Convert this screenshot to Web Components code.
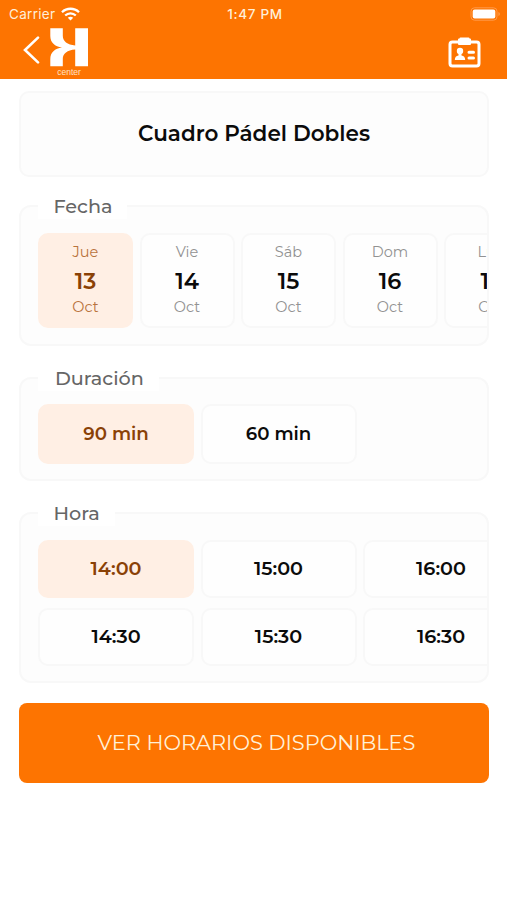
<!DOCTYPE html>
<html lang="es">
<head>
<meta charset="utf-8">
<meta name="viewport" content="width=device-width, initial-scale=1">
<title>Cuadro Pádel Dobles</title>
<style>
  body {
    margin: 0;
    background: #fff;
    color: #0b0b0b;
    font-family: Montserrat, Inter, "Liberation Sans", sans-serif;
  }
</style>
</head>
<body>
<booking-page></booking-page>

<script>
class AppHeader extends HTMLElement {
  constructor() {
    super();
    this.attachShadow({ mode: 'open' }).innerHTML = `
    <style>
    :host {
      display: flex;
      flex-direction: column;
      height: 79px;
      background: #fd7401;
      color: #fff;
      font-family: Inter, "Liberation Sans", sans-serif;
    }
    .status {
      display: grid;
      grid-template-columns: 1fr auto 1fr;
      align-items: center;
      height: 27px;
      padding: 0 6px 0 9px;
      font-size: 13.5px;
      color: #ffefd9;
    }
    .carrier { display: flex; align-items: center; gap: 6px; letter-spacing: .3px; }
    .time { font-size: 13.5px; font-weight: 500; letter-spacing: .65px; }
    .battery { justify-self: end; }
    .bar {
      display: flex;
      justify-content: space-between;
      height: 52px;
      padding: 0 26px 0 23px;
    }
    .left { display: flex; gap: 9px; }
    .back { margin-top: 9px; }
    .badge { margin-top: 10px; }
    .logo { display: flex; flex-direction: column; align-items: center; width: 40px; padding-top: 1px; }
    .logo span {
      font: 8.5px/9px "Liberation Sans", sans-serif;
      margin-top: 1px;
      color: #ffe3c4;
    }
    svg { display: block; }
    </style>
    <div class="status">
      <div class="carrier"><span>Carrier</span>
        <svg width="19" height="14" viewBox="0 0 19 14" fill="none" stroke="#fff" stroke-width="2.3">
          <path d="M1 5.2C5.7.6 13.3.6 18 5.2M4.2 8.5c3-2.9 7.600-2.900 10.600 0"/>
          <path d="M9.500 13.500 6.800 10.800c1.600-1.400 3.800-1.400 5.400 0z" fill="#fff" stroke="none"/>
        </svg>
      </div>
      <span class="time">1:47 PM</span>
      <svg class="battery" width="31" height="14" viewBox="0 0 31 14">
        <rect x="1" y=".8" width="26" height="12.400" rx="3.500" fill="none" stroke="#ff9a4a"/>
        <rect x="2.700" y="2.400" width="22.600" height="9.200" rx="2" fill="#fff"/>
        <path d="M28.500 5v4c1.700-.6 1.700-3.400 0-4z" fill="#ffa45c"/>
      </svg>
    </div>
    <div class="bar">
      <div class="left">
        <svg class="back" width="17" height="28" viewBox="0 0 17 28" fill="none" stroke="#fff" stroke-width="2.600" stroke-linecap="round">
          <path d="M15 1.600 2 14l13 12.400"/>
        </svg>
        <div class="logo">
          <svg width="40" height="39" viewBox="0 0 40 39" fill="#fff">
            <path d="M1.300.3h12.500v7.500c0 5.500 4.500 9.200 12.400 9.700V.3H39V38.300H26.200V21.500c-7.900.5-12.400 4.200-12.400 9.200v7.600H1.300V31c0-6.500 4.500-10.500 11.700-11.500C5.800 18.500 1.300 14.500 1.300 8z"/>
          </svg>
          <span>center</span>
        </div>
      </div>
      <svg class="badge" width="33" height="31" viewBox="0 0 33 31">
        <rect x="2" y="5" width="29" height="24" rx="2.500" fill="none" stroke="#fff" stroke-width="3"/>
        <path d="M12.500.5h8a1 1 0 0 1 1 1H22a1 1 0 0 1 1 1V7a1 1 0 0 1-1 1H11a1 1 0 0 1-1-1V2.500a1 1 0 0 1 1-1h.5a1 1 0 0 1 1-1z" fill="#fff"/>
        <circle cx="12" cy="14" r="3.200" fill="#fff"/>
        <path d="M10.500 16h3v2.500c2.300.4 3.700 1.600 3.700 4.500H6.800c0-2.900 1.400-4.100 3.700-4.500z" fill="#fff"/>
        <path d="M21 15.300h4.500M21 21h4.500" stroke="#fff" stroke-width="3" stroke-linecap="round"/>
      </svg>
    </div>`;
  }
}
customElements.define('app-header', AppHeader);

// Bordered group with the label sitting on the top edge
class OptionGroup extends HTMLElement {
  constructor() {
    super();
    this.attachShadow({ mode: 'open' }).innerHTML = `
    <style>
    :host { display: block; }
    fieldset {
      min-width: 0;
      margin: 0;
      padding: var(--pad-top, 14px) 0 var(--pad-bottom, 15px) 17px;
      border: 2px solid #f8f8f8;
      border-radius: 12px;
      background: #fdfdfd;
    }
    legend {
      box-sizing: border-box;
      height: 26px;
      padding: 0 15px 0 var(--legend-left, 15px);
      background: #fff;
      color: #666;
      font-size: 19.200px;
      font-weight: 500;
      line-height: var(--legend-line, 27px);
    }
    .track {
      display: grid;
      grid-auto-flow: column;
      grid-template-rows: var(--rows, auto);
      grid-auto-columns: max-content;
      gap: 10px 6.500px;
      overflow: hidden;
    }
    </style>
    <fieldset>
      <legend></legend>
      <div class="track"><slot></slot></div>
    </fieldset>`;
  }

  connectedCallback() {
    this.shadowRoot.querySelector('legend').textContent = this.getAttribute('label');
  }
}
customElements.define('option-group', OptionGroup);

class DayOption extends HTMLElement {
  constructor() {
    super();
    this.attachShadow({ mode: 'open' }).innerHTML = `
    <style>
    :host {
      box-sizing: border-box;
      display: flex;
      flex-direction: column;
      align-items: center;
      width: 95px;
      height: 95px;
      padding-top: 8px;
      border: 2px solid #f8f8f8;
      border-radius: 10px;
      background: #fefefe;
      color: #929292;
      font-size: 14.500px;
      line-height: 18px;
    }
    :host([selected]) { background: #ffefe4; border-color: #ffefe4; color: #b9733c; }
    b { padding-top: 3px; font-size: 22.400px; font-weight: 600; line-height: 34px; color: #0b0b0b; }
    :host([selected]) b { color: #8a4106; }
    </style>
    <span><slot></slot></span>
    <b></b>
    <span>Oct</span>`;
  }

  connectedCallback() {
    this.shadowRoot.querySelector('b').textContent = this.getAttribute('day');
  }
}
customElements.define('day-option', DayOption);

class ChoiceOption extends HTMLElement {
  constructor() {
    super();
    this.attachShadow({ mode: 'open' }).innerHTML = `
    <style>
    :host {
      box-sizing: border-box;
      display: flex;
      align-items: center;
      justify-content: center;
      width: 156px;
      height: var(--choice-height, 58px);
      padding-bottom: var(--choice-lift, 3px);
      border: 2px solid #f8f8f8;
      border-radius: 10px;
      background: #fefefe;
      font-size: var(--choice-size, 19.200px);
      font-weight: 600;
    }
    :host([selected]) { background: #ffefe4; border-color: #ffefe4; color: #8a4106; }
    </style>
    <slot></slot>`;
  }
}
customElements.define('choice-option', ChoiceOption);

class BookingPage extends HTMLElement {
  constructor() {
    super();
    const days = [['Jue', 13], ['Vie', 14], ['Sáb', 15], ['Dom', 16], ['Lun', 17]];
    const hours = ['14:00', '14:30', '15:00', '15:30', '16:00', '16:30'];

    this.attachShadow({ mode: 'open' }).innerHTML = `
    <style>
    :host { display: block; }
    main { display: flex; flex-direction: column; padding: 12px 18px 0 19px; }
    h1 {
      box-sizing: border-box;
      height: 86px;
      margin: 0 0 16px;
      border: 2px solid #f8f8f8;
      border-radius: 10px;
      background: #fdfdfd;
      font-size: 21.500px;
      font-weight: 600;
      line-height: 81px;
      text-align: center;
    }
    option-group { --legend-left: 15.500px; }
    .date { margin-bottom: 19px; --pad-bottom: 16px; }
    .length {
      margin-bottom: 19px;
      --legend-left: 17px;
      --legend-line: 26px;
      --pad-top: 13px;
      --choice-height: 60px;
      --choice-size: 18.200px;
      --choice-lift: 2px;
    }
    .hour { margin-bottom: 20px; --rows: auto auto; }
    button {
      height: 80px;
      padding: 0 0 2px 5px;
      border: 0;
      border-radius: 8px;
      background: #fd7401;
      color: #fff0d8;
      font: inherit;
      font-size: 20.900px;
    }
    </style>
    <app-header></app-header>
    <main>
      <h1>Cuadro Pádel Dobles</h1>
      <option-group class="date" label="Fecha">${this.createDays(days)}</option-group>
      <option-group class="length" label="Duración">
        <choice-option selected>90 min</choice-option>
        <choice-option>60 min</choice-option>
      </option-group>
      <option-group class="hour" label="Hora">${this.createHours(hours)}</option-group>
      <button type="button">VER HORARIOS DISPONIBLES</button>
    </main>`;
  }

  createDays(days) {
    return days.map(([name, day], i) =>
      `<day-option day="${day}" ${i === 0 ? 'selected' : ''}>${name}</day-option>`).join('');
  }

  createHours(hours) {
    return hours.map((hour, i) =>
      `<choice-option ${i === 0 ? 'selected' : ''}>${hour}</choice-option>`).join('');
  }
}
customElements.define('booking-page', BookingPage);
</script>
</body>
</html>
